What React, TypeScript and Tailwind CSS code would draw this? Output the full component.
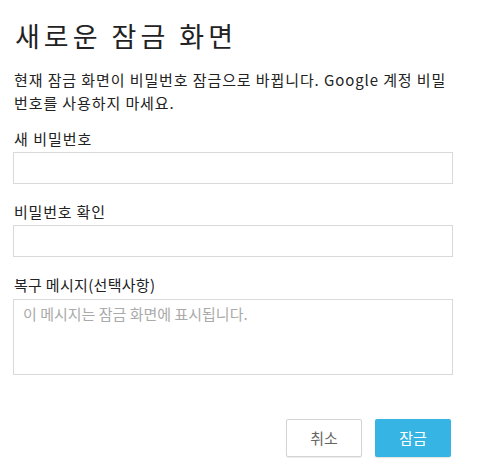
export default function App() {
    return (
        <div className="min-h-screen bg-white px-[13px] pt-[18px] text-[#222] font-['Noto_Sans_CJK_KR','Noto_Sans',sans-serif]">
            {/* Header */}
            <h1 className="text-[27px] leading-[36px] font-normal tracking-[4px] pl-[2px]">새로운 잠금 화면</h1>
            <p className="mt-[14px] w-[440px] text-[15px] leading-[23px] pl-[1px] tracking-[0.9px] break-all">
                현재 잠금 화면이 비밀번호 잠금으로 바뀝니다. Google 계정 비밀번호를 사용하지 마세요.
            </p>

            {/* Fields */}
            <label className="block mt-[14px] text-[15px] leading-[22px] pl-[1px] tracking-[1px]">새 비밀번호</label>
            <input type="password" className="block mt-[2px] w-[440px] h-[32px] border border-[#d9d9d9] outline-none" />

            <label className="block mt-[17px] text-[15px] leading-[22px] pl-[1px] tracking-[0.8px]">비밀번호 확인</label>
            <input type="password" className="block mt-[2px] w-[440px] h-[32px] border border-[#d9d9d9] outline-none" />

            <label className="block mt-[17px] text-[15px] leading-[22px] pl-[1px] tracking-[0.3px]">복구 메시지(선택사항)</label>
            <textarea
                placeholder="이 메시지는 잠금 화면에 표시됩니다."
                className="block mt-[3px] w-[440px] h-[76px] resize-none border border-[#d9d9d9] px-[9px] py-[3px] text-[15px] leading-[22px] outline-none placeholder:text-[#aaa]"
            />

            {/* Actions */}
            <div className="flex justify-end gap-[13px] mt-[44px] pr-[13px]">
                <button className="w-[76px] h-[38px] rounded-[2px] border border-[#d4d4d4] bg-white text-[15px] text-[#666] shadow-[0_1px_1px_rgba(0,0,0,0.08)]">
                    취소
                </button>
                <button className="w-[76px] h-[38px] rounded-[2px] bg-[#36b4e4] text-[15px] text-white shadow-[0_1px_1px_rgba(0,0,0,0.12)]">
                    잠금
                </button>
            </div>
        </div>
    );
}
